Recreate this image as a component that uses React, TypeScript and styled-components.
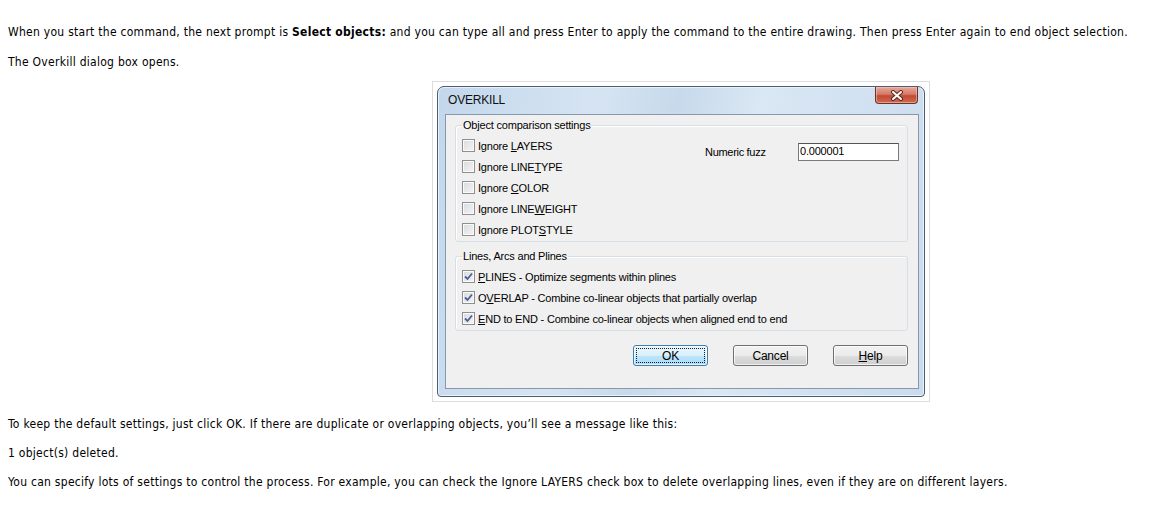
import React from 'react';
import styled, { createGlobalStyle } from 'styled-components';

const GlobalStyle = createGlobalStyle`
  html, body {
    margin: 0;
    padding: 0;
    background: #ffffff;
  }
  body {
    font-family: 'DejaVu Sans Condensed', 'DejaVu Sans', sans-serif;
    font-size: 12px;
    letter-spacing: 0.27px;
    color: #000000;
  }
`;

type CheckItem = {
  before: string;
  key: string;
  after: string;
};

const comparisonItems: CheckItem[] = [
  { before: 'Ignore ', key: 'L', after: 'AYERS' },
  { before: 'Ignore LINE', key: 'T', after: 'YPE' },
  { before: 'Ignore ', key: 'C', after: 'OLOR' },
  { before: 'Ignore LINE', key: 'W', after: 'EIGHT' },
  { before: 'Ignore PLOT', key: 'S', after: 'TYLE' },
];

const lineItems: CheckItem[] = [
  { before: '', key: 'P', after: 'LINES - Optimize segments within plines' },
  { before: 'O', key: 'V', after: 'ERLAP - Combine co-linear objects that partially overlap' },
  { before: '', key: 'E', after: 'ND to END - Combine co-linear objects when aligned end to end' },
];

const App = () => {
  return (
    <Page>
      <GlobalStyle />
      <Para>
        When you start the command, the next prompt is <b>Select objects:</b> and you can type all and press Enter
        to apply the command to the entire drawing. Then press Enter again to end object selection.
      </Para>
      <Para>The Overkill dialog box opens.</Para>
      <Figure>
        <Window>
          <TitleBar>
            <Title>OVERKILL</Title>
            <CloseButton aria-label="Close">
              <svg width="14" height="11" viewBox="0 0 14 11">
                <path d="M3 2 L11 9 M11 2 L3 9" stroke="#5a2a22" strokeWidth="4" strokeLinecap="round" />
                <path d="M3 2 L11 9 M11 2 L3 9" stroke="#ffffff" strokeWidth="2" strokeLinecap="round" />
              </svg>
            </CloseButton>
          </TitleBar>
          <Client>
            <Group>
              <Legend>Object comparison settings</Legend>
              <GroupBody>
                <CheckList>
                  {comparisonItems.map((item) => (
                    <CheckRow key={item.before + item.key}>
                      <CheckBox checked={false} />
                      <span>
                        {item.before}
                        <Mnemonic>{item.key}</Mnemonic>
                        {item.after}
                      </span>
                    </CheckRow>
                  ))}
                </CheckList>
                <FuzzRow>
                  <FuzzLabel>Numeric fuzz</FuzzLabel>
                  <FuzzInput>0.000001</FuzzInput>
                </FuzzRow>
              </GroupBody>
            </Group>
            <Group $gapTop>
              <Legend>Lines, Arcs and Plines</Legend>
              <CheckList>
                {lineItems.map((item) => (
                  <CheckRow key={item.after}>
                    <CheckBox checked />
                    <span>
                      {item.before}
                      <Mnemonic>{item.key}</Mnemonic>
                      {item.after}
                    </span>
                  </CheckRow>
                ))}
              </CheckList>
            </Group>
            <ButtonRow>
              <Button $focused>
                <FocusRing>OK</FocusRing>
              </Button>
              <Button>Cancel</Button>
              <Button>
                <span>
                  <Mnemonic>H</Mnemonic>elp
                </span>
              </Button>
            </ButtonRow>
          </Client>
        </Window>
      </Figure>
      <Para $tight>
        To keep the default settings, just click OK. If there are duplicate or overlapping objects, you’ll see a
        message like this:
      </Para>
      <Para $tight>1 object(s) deleted.</Para>
      <Para $tight>
        You can specify lots of settings to control the process. For example, you can check the Ignore LAYERS check
        box to delete overlapping lines, even if they are on different layers.
      </Para>
    </Page>
  );
};

export default App;

const CheckBox = ({ checked }: { checked: boolean }) => (
  <Box>
    {checked && (
      <svg width="9" height="9" viewBox="0 0 9 9">
        <path d="M1 4.5 L3.5 7 L8 1.5" fill="none" stroke="#4a5f97" strokeWidth="1.8" />
      </svg>
    )}
  </Box>
);

const Page = styled.div`
  padding: 24px 8px 20px 8px;
`;

const Para = styled.p<{ $tight?: boolean }>`
  margin: 0 0 ${({ $tight }) => ($tight ? 13 : 14)}px 0;
  line-height: 16px;
  white-space: nowrap;
`;

const Figure = styled.div`
  margin: -3px 0 14px 424px;
  width: 488px;
  padding: 4px;
  border: 1px solid #dcdcdc;
  background: #ffffff;
  letter-spacing: normal;
`;

const Window = styled.div`
  border: 1px solid #4c5d70;
  border-radius: 7px 7px 4px 4px;
  background: linear-gradient(100deg, #c3d7ec 0%, #d6e4f2 30%, #c7d9eb 45%, #dae7f4 60%, #c9dbee 100%);
  padding: 0 5px 7px 7px;
  box-shadow: inset 0 0 0 1px #e9f1f9;
  font-family: 'Liberation Sans', Arial, sans-serif;
  font-size: 11px;
  color: #000000;
`;

const TitleBar = styled.div`
  height: 27px;
  display: flex;
  align-items: flex-start;
  justify-content: space-between;
`;

const Title = styled.span`
  margin: 6px 0 0 3px;
  font-size: 12px;
  letter-spacing: -0.2px;
  color: #101010;
`;

const CloseButton = styled.div`
  width: 41px;
  height: 16px;
  margin-right: 1px;
  border: 1px solid #6b3328;
  border-top: none;
  border-radius: 0 0 4px 4px;
  background: linear-gradient(180deg, #e8a898 0%, #d57a68 45%, #c04a33 55%, #cf6b52 100%);
  display: flex;
  align-items: center;
  justify-content: center;
  box-shadow: inset 0 0 0 1px rgba(255, 210, 200, 0.5);
`;

const Client = styled.div`
  background: #f0f0f0;
  border: 1px solid #8598ad;
  padding: 3px 10px 22px 9px;
  display: flex;
  flex-direction: column;
`;

const Group = styled.fieldset<{ $gapTop?: boolean }>`
  margin: ${({ $gapTop }) => ($gapTop ? 7 : 0)}px 0 0 0;
  padding: 3px 6px 1px 6px;
  border: 1px solid #d5dfe5;
  border-radius: 3px;
  min-width: 0;
  box-shadow: inset 1px 1px 0 #ffffff;
`;

const Legend = styled.legend`
  padding: 0 1px;
  line-height: 14px;
  letter-spacing: -0.2px;
`;

const GroupBody = styled.div`
  display: flex;
  justify-content: space-between;
`;

const CheckList = styled.div`
  display: flex;
  flex-direction: column;
`;

const CheckRow = styled.div`
  height: 21px;
  display: flex;
  align-items: center;
  gap: 3px;
  letter-spacing: -0.2px;
  white-space: nowrap;
`;

const Box = styled.span`
  width: 11px;
  height: 11px;
  border: 1px solid #8e8f8f;
  background: linear-gradient(135deg, #d9dbde 0%, #f4f4f4 100%);
  box-shadow: inset 0 0 0 1px #fafafa;
  display: flex;
  align-items: center;
  justify-content: center;
  flex-shrink: 0;
`;

const Mnemonic = styled.span`
  text-decoration: underline;
  text-underline-offset: 1px;
`;

const FuzzRow = styled.div`
  display: flex;
  align-items: center;
  padding-top: 8px;
  margin-right: 2px;
  align-self: flex-start;
`;

const FuzzLabel = styled.span`
  width: 93px;
  letter-spacing: -0.3px;
`;

const FuzzInput = styled.div`
  width: 98px;
  height: 16px;
  border: 1px solid #7a7a7a;
  border-top-color: #545454;
  background: #ffffff;
  padding: 0 0 0 1px;
  line-height: 15px;
  letter-spacing: -0.2px;
`;

const ButtonRow = styled.div`
  display: flex;
  justify-content: flex-end;
  gap: 25px;
  margin-top: 14px;
`;

const Button = styled.div<{ $focused?: boolean }>`
  width: 73px;
  height: 19px;
  border: 1px solid ${({ $focused }) => ($focused ? '#3c7fb1' : '#707070')};
  border-radius: 3px;
  background: ${({ $focused }) =>
    $focused
      ? 'linear-gradient(180deg, #eaf6fd 0%, #d9f0fc 50%, #bee6fd 51%, #a7d9f5 100%)'
      : 'linear-gradient(180deg, #f2f2f2 0%, #ebebeb 50%, #dddddd 51%, #cfcfcf 100%)'};
  box-shadow: inset 0 0 0 1px rgba(255, 255, 255, 0.7);
  display: flex;
  align-items: center;
  justify-content: center;
  font-size: 12px;
  letter-spacing: -0.2px;
  color: #000000;
  box-sizing: content-box;
`;

const FocusRing = styled.span`
  width: 67px;
  height: 13px;
  border: 1px dotted #1a1a1a;
  display: flex;
  align-items: center;
  justify-content: center;
`;
